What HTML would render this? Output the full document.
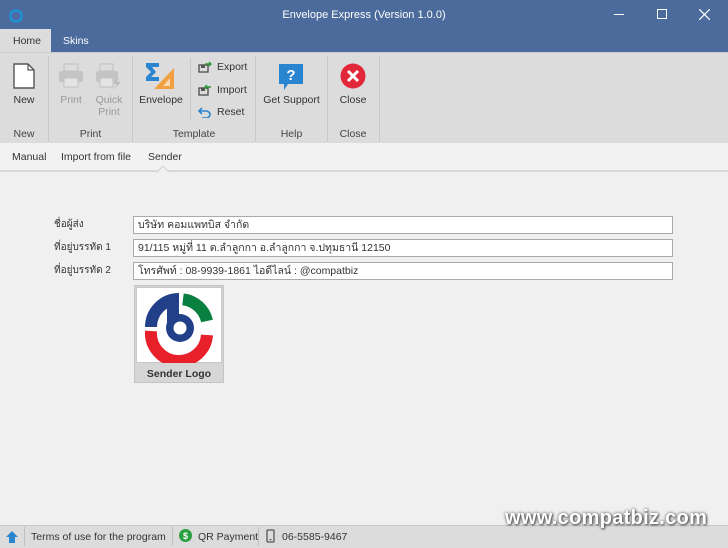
<!DOCTYPE html>
<html><head><meta charset="utf-8"><style>
*{margin:0;padding:0;box-sizing:border-box}
body{width:728px;height:548px;overflow:hidden;background:#f0f0f0;font-family:"Liberation Sans",sans-serif;font-size:10.5px;color:#333;position:relative}
.abs{position:absolute}
.title{left:0;top:0;width:728px;height:52px;background:#4b6b9c}
.tt{color:#fff;font-size:11px;top:9px;left:0;width:728px;text-align:center}
.tab{top:35px;font-size:10.5px;color:#fff}
.ribbon{left:0;top:52px;width:728px;height:91px;background:#dcdcdc;border-top:1px solid #c8ccd4}
.sep{top:56px;width:1px;height:86px;background:#c8c8c8}
.lbl{font-size:10.5px;color:#333;text-align:center}
.gl{top:128px;font-size:10.5px;color:#444;text-align:center}
.sub{left:0;top:143px;width:728px;height:29px;background:#f2f2f2;border-bottom:2px solid #d8d8d8}
.inp{left:133px;width:540px;height:18px;background:#fff;border:1px solid #aaa;font-family:"Liberation Sans","Noto Sans CJK SC",sans-serif;font-size:10.5px;padding:0 4px;line-height:16px;overflow:hidden}
.fl{left:54px;font-family:"Liberation Sans","Noto Sans CJK SC",sans-serif;font-size:10px;line-height:12px}
.status{left:0;top:525px;width:728px;height:23px;background:#dcdcdc;border-top:1px solid #c8c8c8}
.sd{top:527px;width:1px;height:19px;background:#c0c0c0}
</style></head><body>
<div class="abs title"></div>
<svg class="abs" style="left:9px;top:9px" width="14" height="14"><circle cx="7" cy="7" r="5.5" fill="none" stroke="#1e90d8" stroke-width="2.5"/></svg>
<div class="abs tt">Envelope Express (Version 1.0.0)</div>
<div class="abs" style="left:614px;top:14px;width:10px;height:1px;background:#fff"></div>
<div class="abs" style="left:657px;top:9px;width:10px;height:10px;border:1px solid #fff"></div>
<svg class="abs" style="left:699px;top:9px" width="11" height="11"><path d="M0 0L11 11M11 0L0 11" stroke="#fff" stroke-width="1.2"/></svg>
<div class="abs" style="left:0;top:29px;width:51px;height:24px;background:#dcdcdc"></div>
<div class="abs tab" style="left:13px;color:#333">Home</div>
<div class="abs tab" style="left:63px">Skins</div>
<div class="abs ribbon"></div>
<svg class="abs" style="left:13px;top:63px" width="22" height="26"><path d="M1 1H15L21 7V25H1Z" fill="#fff" stroke="#555" stroke-width="1.4"/><path d="M15 1V7H21" fill="none" stroke="#555" stroke-width="1.2"/></svg>
<div class="abs lbl" style="left:0;top:94px;width:48px">New</div>
<div class="abs gl" style="left:0;width:48px">New</div>
<div class="abs sep" style="left:48px"></div>
<svg class="abs" style="left:58px;top:63px" width="26" height="26"><rect x="6" y="1" width="14" height="7" fill="#ddd" stroke="#c0c0c0"/><rect x="1" y="8" width="24" height="11" rx="2" fill="#c4c4c4"/><rect x="6" y="15" width="14" height="9" fill="#e4e4e4" stroke="#c0c0c0"/></svg>
<svg class="abs" style="left:95px;top:63px" width="28" height="26"><rect x="5" y="1" width="13" height="7" fill="#ddd" stroke="#c0c0c0"/><rect x="1" y="8" width="22" height="11" rx="2" fill="#c4c4c4"/><rect x="5" y="15" width="13" height="9" fill="#e4e4e4" stroke="#c0c0c0"/><path d="M24 14L18 21H22L19 26L26 19H22Z" fill="#bbb"/></svg>
<div class="abs lbl" style="left:55px;top:94px;width:32px;color:#999">Print</div>
<div class="abs lbl" style="left:90px;top:94px;width:38px;color:#999;line-height:12px">Quick<br>Print</div>
<div class="abs gl" style="left:49px;width:83px">Print</div>
<div class="abs sep" style="left:132px"></div>
<svg class="abs" style="left:145px;top:62px" width="30" height="28"><path d="M1 1H14V5H7L11 10L6 15H14V19H1V15L6 10L1 5Z" fill="#2a85d0"/><path d="M29 6V27H9Z" fill="#f0a040"/><path d="M25 16V24H18Z" fill="#fff" opacity=".6"/></svg>
<div class="abs lbl" style="left:136px;top:94px;width:50px">Envelope</div>
<div class="abs" style="left:190px;top:58px;width:1px;height:62px;background:#c8c8c8"></div>
<svg class="abs" style="left:198px;top:61px" width="14" height="12"><rect x="1" y="4" width="9" height="7" fill="none" stroke="#555" stroke-width="1.4"/><rect x="3" y="4" width="4" height="3" fill="#555"/><path d="M7 3H13M11 1L13 3L11 5" stroke="#2a9a3a" stroke-width="1.4" fill="none"/></svg>
<svg class="abs" style="left:198px;top:84px" width="14" height="12"><rect x="1" y="4" width="9" height="7" fill="none" stroke="#555" stroke-width="1.4"/><rect x="3" y="4" width="4" height="3" fill="#555"/><path d="M13 3H7M9 1L7 3L9 5" stroke="#2a9a3a" stroke-width="1.4" fill="none"/></svg>
<svg class="abs" style="left:198px;top:106px" width="14" height="12"><path d="M4 2L1 5L4 8M1 5H8A4 3.5 0 0 1 8 12H4" stroke="#2a85d0" stroke-width="1.6" fill="none"/></svg>
<div class="abs" style="left:217px;top:61px">Export</div>
<div class="abs" style="left:217px;top:84px">Import</div>
<div class="abs" style="left:217px;top:106px">Reset</div>
<div class="abs gl" style="left:133px;width:122px">Template</div>
<div class="abs sep" style="left:255px"></div>
<svg class="abs" style="left:278px;top:63px" width="26" height="28"><path d="M1 1H25V21H10L6 27V21H1Z" fill="#2a85d0"/><text x="13" y="17" font-family="Liberation Sans" font-weight="bold" font-size="15" fill="#fff" text-anchor="middle">?</text></svg>
<div class="abs lbl" style="left:256px;top:94px;width:71px">Get Support</div>
<div class="abs gl" style="left:256px;width:71px">Help</div>
<div class="abs sep" style="left:327px"></div>
<svg class="abs" style="left:340px;top:63px" width="26" height="26"><circle cx="13" cy="13" r="12.5" fill="#e0283a"/><path d="M8 8L18 18M18 8L8 18" stroke="#fff" stroke-width="3"/></svg>
<div class="abs lbl" style="left:328px;top:94px;width:50px">Close</div>
<div class="abs gl" style="left:328px;width:50px">Close</div>
<div class="abs sep" style="left:379px"></div>
<div class="abs sub"></div>
<div class="abs" style="left:12px;top:151px">Manual</div>
<div class="abs" style="left:61px;top:151px">Import from file</div>
<div class="abs" style="left:148px;top:151px">Sender</div>
<svg class="abs" style="left:157px;top:166px" width="12" height="7"><path d="M0 6L6 0L12 6" fill="#f0f0f0" stroke="#d0d0d0"/></svg>
<div class="abs fl" style="top:219px">ชื่อผู้ส่ง</div>
<div class="abs fl" style="top:242px">ที่อยู่บรรทัด 1</div>
<div class="abs fl" style="top:265px">ที่อยู่บรรทัด 2</div>
<div class="abs inp" style="top:216px">บริษัท คอมแพทบิส จำกัด</div>
<div class="abs inp" style="top:239px">91/115 หมู่ที่ 11 ต.ลำลูกกา อ.ลำลูกกา จ.ปทุมธานี 12150</div>
<div class="abs inp" style="top:262px">โทรศัพท์ : 08-9939-1861 ไอดีไลน์ : @compatbiz</div>
<div class="abs" style="left:134px;top:285px;width:90px;height:98px;background:#d6d6d6;border:1px solid #c4c4c4"></div>
<div class="abs" style="left:136px;top:287px;width:86px;height:76px;background:#fff;border:1px solid #c8c8c8"></div>
<svg class="abs" style="left:141px;top:287px" width="76" height="76" viewBox="0 0 76 76">
<path d="M10 40A28 28 0 0 1 38 12" fill="none" stroke="#22408a" stroke-width="12"/>
<path d="M42 12.3A28 28 0 0 1 66 34" fill="none" stroke="#0a8040" stroke-width="12"/>
<path d="M10 44A28 28 0 0 0 66 48" fill="none" stroke="#e8202a" stroke-width="12"/>
<rect x="26" y="12" width="12" height="28" fill="#22408a"/>
<circle cx="39" cy="41" r="14" fill="#22408a"/>
<circle cx="39" cy="41" r="6.5" fill="#fff"/>
</svg>
<div class="abs" style="left:134px;top:368px;width:90px;text-align:center;font-weight:bold;font-size:10.5px;color:#333">Sender Logo</div>
<div class="abs status"></div>
<svg class="abs" style="left:6px;top:531px" width="12" height="12"><path d="M6 0L12 6H9V12H3V6H0Z" fill="#2a85d0"/></svg>
<div class="abs sd" style="left:24px"></div>
<div class="abs" style="left:31px;top:531px">Terms of use for the program</div>
<div class="abs sd" style="left:172px"></div>
<svg class="abs" style="left:179px;top:529px" width="13" height="13"><circle cx="6.5" cy="6.5" r="6.5" fill="#2aa040"/><text x="6.5" y="10" font-size="9" font-weight="bold" fill="#fff" text-anchor="middle" font-family="Liberation Sans">$</text></svg>
<div class="abs" style="left:198px;top:531px">QR Payment</div>
<div class="abs sd" style="left:258px"></div>
<svg class="abs" style="left:266px;top:529px" width="9" height="14"><rect x="1" y="1" width="7" height="12" rx="1" fill="none" stroke="#555" stroke-width="1.3"/><rect x="3.5" y="10" width="2" height="1.2" fill="#555"/></svg>
<div class="abs" style="left:282px;top:531px">06-5585-9467</div>
<div class="abs" style="left:505px;top:507px;font-size:20px;font-weight:bold;color:#fff;text-shadow:0 0 3px #555,1px 1px 2px #444;letter-spacing:0.3px">www.compatbiz.com</div>
</body></html>
